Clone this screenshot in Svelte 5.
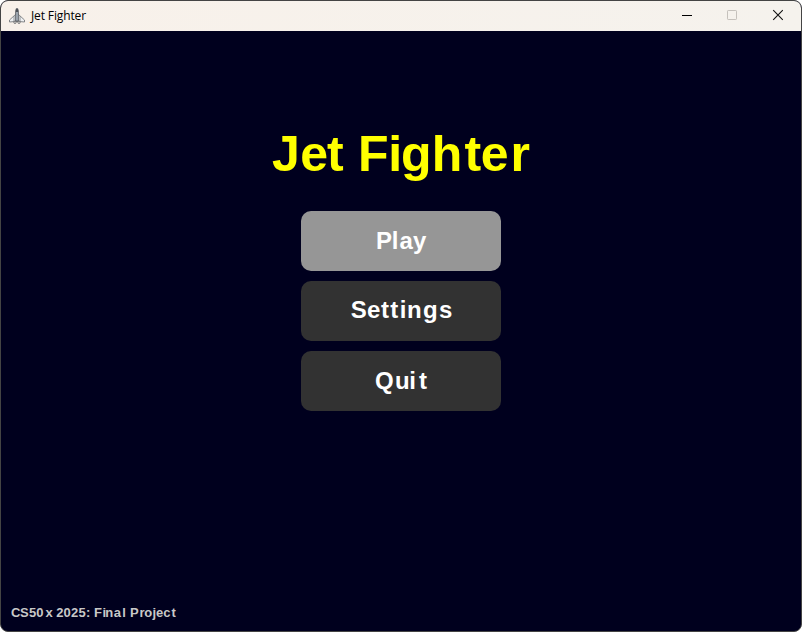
<script>
  const title = [1, 29.3, 56, 70, 87, 117.3, 130, 160.8, 193.5, 209.8, 239.5];
  const buttons = [
    { label: 'Play', baseline: 38, xs: [75, 90.7, 98.5, 112], active: true },
    { label: 'Settings', baseline: 37, xs: [49.8, 65.9, 79.9, 89.2, 98.8, 105.9, 122, 138] },
    { label: 'Quit', baseline: 38, xs: [74, 94, 108.3, 118] }
  ];
  const credit = [
    0, 9, 18, 25.2, 34.5, 41.5, 45.2, 52.6, 59.9, 67.4, 75.1, 79, 83, 91.5, 94.3, 102.8, 111.2,
    115, 119, 128.5, 133.2, 141.5, 145, 152.2, 160.6
  ];
</script>

<div class="window">
  <header>
    <svg class="jet" width="18" height="18" viewBox="0 0 18 18">
      <path d="M8 7 L1.5 13 V15 L7 14.5 H11 L16.5 15 V13 L10 7Z" fill="#eef0f2" stroke="#777a7e" stroke-width=".9" />
      <path d="M7.5 14V4L8.3 1.5H9.7L10.5 4V14Z" fill="#9aa3ac" stroke="#54585d" stroke-width=".7" />
      <path d="M8 2h2v3H8z" fill="#4d5258" />
      <path d="M6 9v5M12 9v5" stroke="#777c82" stroke-width=".8" />
      <circle cx="7" cy="15.3" r="1.2" fill="#ddd" stroke="#555" stroke-width=".7" />
      <circle cx="11" cy="15.3" r="1.2" fill="#ddd" stroke="#555" stroke-width=".7" />
    </svg>
    <span class="caption">Jet Fighter</span>
    <svg class="controls" width="112" height="30" viewBox="0 0 112 30" fill="none">
      <path d="M4 14.5h10" stroke="#000" />
      <rect x="49.5" y="9.5" width="9" height="9" rx=".7" stroke="#c5c1bc" />
      <path d="M95.2 9.2l9.6 9.6M104.8 9.2l-9.6 9.6" stroke="#111" stroke-width="1.1" />
    </svg>
  </header>
  <main>
    <h1>
      <svg width="260" height="60"><text x={title.join(' ')} y="50">Jet Fighter</text></svg>
    </h1>
    <nav>
      {#each buttons as b}
        <button class:active={b.active}>
          <svg width="200" height="60"><text x={b.xs.join(' ')} y={b.baseline}>{b.label}</text></svg>
        </button>
      {/each}
    </nav>
    <footer>
      <svg width="180" height="20"><text x={credit.join(' ')} y="15">CS50x 2025: Final Project</text></svg>
    </footer>
  </main>
</div>

<style>
  :global(body) { background: #fff; }
  .window {
    box-sizing: border-box;
    width: 802px;
    height: 632px;
    border: 1px solid #444;
    border-radius: 8px;
    overflow: hidden;
    display: flex;
    flex-direction: column;
    background: #00001e;
  }
  header {
    height: 30px;
    flex: none;
    display: flex;
    align-items: center;
    background: linear-gradient(90deg, #f8f1ea, #f5f2ed);
  }
  svg { display: block; }
  .jet { margin-left: 7px; }
  .caption {
    margin-left: 5px;
    font: 12px/18px "Open Sans", "Noto Sans", sans-serif;
    letter-spacing: -.13px;
    color: #000;
    white-space: nowrap;
  }
  .controls { margin-left: auto; margin-right: 11px; }
  main {
    flex: 1;
    display: flex;
    flex-direction: column;
    align-items: center;
    font-family: "Liberation Sans", Arial, sans-serif;
    font-weight: 700;
  }
  h1 { margin: 90px 0 0; font-size: 50px; fill: #ff0; }
  nav { display: flex; flex-direction: column; gap: 10px; margin-top: 30px; }
  button {
    width: 200px;
    height: 60px;
    padding: 0;
    border: 0;
    border-radius: 10px;
    background: #323232;
    font: 700 24px "Liberation Sans", Arial, sans-serif;
    fill: #fff;
  }
  button.active { background: #969696; }
  footer {
    margin: auto 0 9px 10px;
    align-self: flex-start;
    font-size: 13px;
    fill: #c8c8c8;
  }
</style>
